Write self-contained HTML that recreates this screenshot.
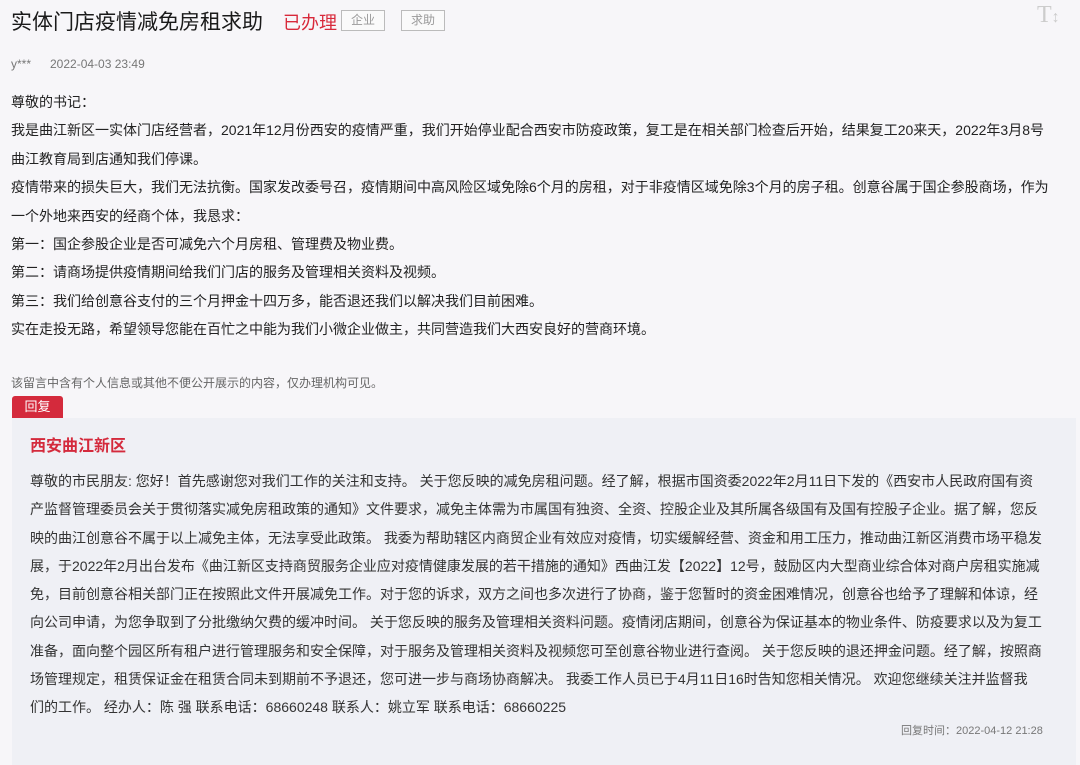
<!DOCTYPE html>
<html><head><meta charset="utf-8"><style>
body{margin:0;width:1080px;height:765px;overflow:hidden;background:#f7f6f9;font-family:"Liberation Sans","Noto Sans CJK SC",sans-serif;color:#222;position:relative}
.a{position:absolute;white-space:nowrap}
.title{left:11px;top:6px;font-size:21px;color:#1a1a1a}
.st{left:283px;top:9px;font-size:18px;color:#d8293b}
.tag{top:10px;font-size:12px;color:#999;border:1px solid #bbb;height:19px;line-height:19px;padding:0 9px;background:#fafafa}
.meta{top:57px;font-size:12px;color:#777}
.p{left:11px;font-size:14px;line-height:28.4px;color:#222}
.note{left:11px;top:374px;font-size:12px;color:#666}
.btn{left:12px;top:396px;width:51px;height:22px;background:#d42a3c;color:#fff;font-size:13px;line-height:22px;text-align:center;border-radius:3px 3px 0 0}
.box{position:absolute;left:12px;top:418px;width:1064px;height:347px;background:#eff0f5}
.org{left:30px;top:432px;font-size:16px;font-weight:bold;color:#d42a3c}
.r{left:30px;top:467px;font-size:14px;line-height:28.25px;color:#333}
.time{left:901px;top:722px;font-size:11px;color:#777}
</style></head><body>
<div class="a title">实体门店疫情减免房租求助</div>
<div class="a st">已办理</div>
<div class="a tag" style="left:341px">企业</div>
<div class="a tag" style="left:401px">求助</div>
<div class="a" style="left:1037px;top:2px;font-size:24px;color:#ccc;font-family:'Liberation Serif',serif">T<span style="font-size:16px">↕</span></div>
<div class="a meta" style="left:11px">y***</div>
<div class="a meta" style="left:50px">2022-04-03 23:49</div>
<div class="a p" style="top:88px">尊敬的书记：<br>我是曲江新区一实体门店经营者，2021年12月份西安的疫情严重，我们开始停业配合西安市防疫政策，复工是在相关部门检查后开始，结果复工20来天，2022年3月8号<br>曲江教育局到店通知我们停课。<br>疫情带来的损失巨大，我们无法抗衡。国家发改委号召，疫情期间中高风险区域免除6个月的房租，对于非疫情区域免除3个月的房子租。创意谷属于国企参股商场，作为<br>一个外地来西安的经商个体，我恳求：<br>第一：国企参股企业是否可减免六个月房租、管理费及物业费。<br>第二：请商场提供疫情期间给我们门店的服务及管理相关资料及视频。<br>第三：我们给创意谷支付的三个月押金十四万多，能否退还我们以解决我们目前困难。<br>实在走投无路，希望领导您能在百忙之中能为我们小微企业做主，共同营造我们大西安良好的营商环境。</div>
<div class="a note">该留言中含有个人信息或其他不便公开展示的内容，仅办理机构可见。</div>
<div class="box"></div>
<div class="a btn">回复</div>
<div class="a org">西安曲江新区</div>
<div class="a r">尊敬的市民朋友: 您好！首先感谢您对我们工作的关注和支持。 关于您反映的减免房租问题。经了解，根据市国资委2022年2月11日下发的《西安市人民政府国有资<br>产监督管理委员会关于贯彻落实减免房租政策的通知》文件要求，减免主体需为市属国有独资、全资、控股企业及其所属各级国有及国有控股子企业。据了解，您反<br>映的曲江创意谷不属于以上减免主体，无法享受此政策。 我委为帮助辖区内商贸企业有效应对疫情，切实缓解经营、资金和用工压力，推动曲江新区消费市场平稳发<br>展，于2022年2月出台发布《曲江新区支持商贸服务企业应对疫情健康发展的若干措施的通知》西曲江发【2022】12号，鼓励区内大型商业综合体对商户房租实施减<br>免，目前创意谷相关部门正在按照此文件开展减免工作。对于您的诉求，双方之间也多次进行了协商，鉴于您暂时的资金困难情况，创意谷也给予了理解和体谅，经<br>向公司申请，为您争取到了分批缴纳欠费的缓冲时间。 关于您反映的服务及管理相关资料问题。疫情闭店期间，创意谷为保证基本的物业条件、防疫要求以及为复工<br>准备，面向整个园区所有租户进行管理服务和安全保障，对于服务及管理相关资料及视频您可至创意谷物业进行查阅。 关于您反映的退还押金问题。经了解，按照商<br>场管理规定，租赁保证金在租赁合同未到期前不予退还，您可进一步与商场协商解决。 我委工作人员已于4月11日16时告知您相关情况。 欢迎您继续关注并监督我<br>们的工作。 经办人：陈 强 联系电话：68660248 联系人：姚立军 联系电话：68660225</div>
<div class="a time">回复时间：2022-04-12 21:28</div>
</body></html>
